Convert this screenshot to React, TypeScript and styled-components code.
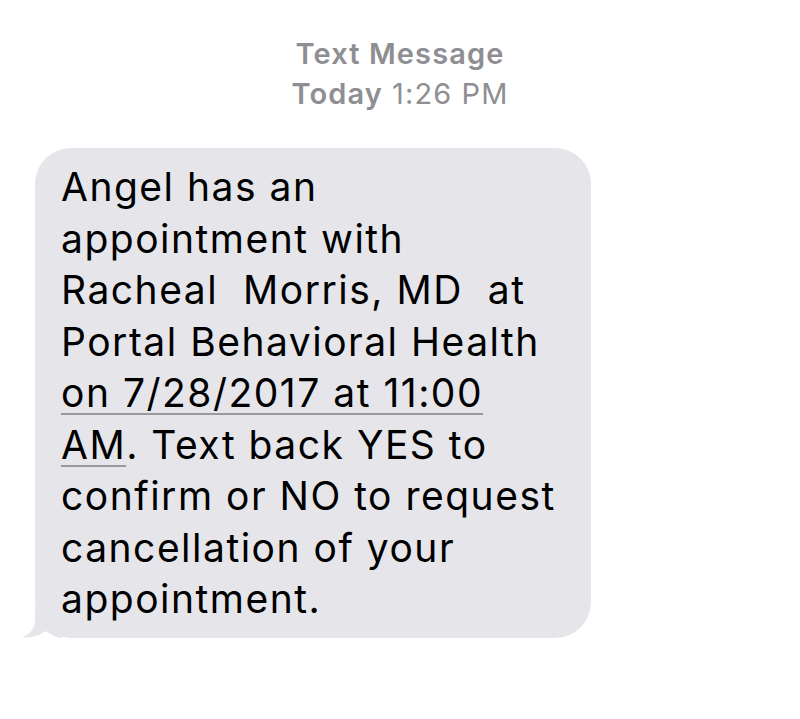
import React from "react";
import styled, { createGlobalStyle } from "styled-components";

const Global = createGlobalStyle`
  html, body { margin: 0; padding: 0; background: #ffffff; }
  body { font-family: Inter, "Liberation Sans", Arial, sans-serif; -webkit-font-smoothing: antialiased; }
`;

const Page = styled.div`
  width: 800px;
  height: 719px;
  display: flex;
  flex-direction: column;
  background: #ffffff;
`;

const Header = styled.div`
  display: flex;
  flex-direction: column;
  align-items: center;
  padding-top: 34px;
  color: #8e8e93;
  font-size: 29px;
  line-height: 40px;
  letter-spacing: 1.1px;
`;

const Strong = styled.span`
  font-weight: 600;
`;

const Thread = styled.div`
  display: flex;
  padding: 34px 0 0 35px;
`;

const Bubble = styled.div`
  position: relative;
  width: 556px;
  box-sizing: border-box;
  background: #e5e5ea;
  border-radius: 36px;
  padding: 13px 16px 13px 26px;
  color: #000000;
  font-size: 39px;
  line-height: 51.5px;
  letter-spacing: 1.5px;
`;

const Link = styled.span`
  text-decoration: underline;
  text-decoration-color: #9a9a9e;
  text-decoration-thickness: 2px;
  text-underline-offset: 6px;
`;

const Tail = styled.svg`
  position: absolute;
  left: -13px;
  bottom: 0;
  width: 40px;
  height: 30px;
`;

export default function App() {
  return (
    <Page>
      <Global />
      <Header>
        <Strong>Text Message</Strong>
        <span>
          <Strong>Today</Strong> 1:26 PM
        </span>
      </Header>
      <Thread>
        <Bubble>
          Angel has an
          <br />
          appointment with
          <br />
          Racheal&nbsp; Morris, MD&nbsp; at
          <br />
          Portal Behavioral Health
          <br />
          <Link>
            on 7/28/2017 at 11:00
            <br />
            AM
          </Link>
          . Text back YES to
          <br />
          confirm or NO to request
          <br />
          cancellation of your
          <br />
          appointment.
          <Tail viewBox="0 0 40 30">
            <path d="M13 0 L13 12 C13 21 8 26 0 29.5 C10 30 18 27 24 23 C28 26 34 30 40 30 L40 0 Z" fill="#e5e5ea" />
          </Tail>
        </Bubble>
      </Thread>
    </Page>
  );
}
